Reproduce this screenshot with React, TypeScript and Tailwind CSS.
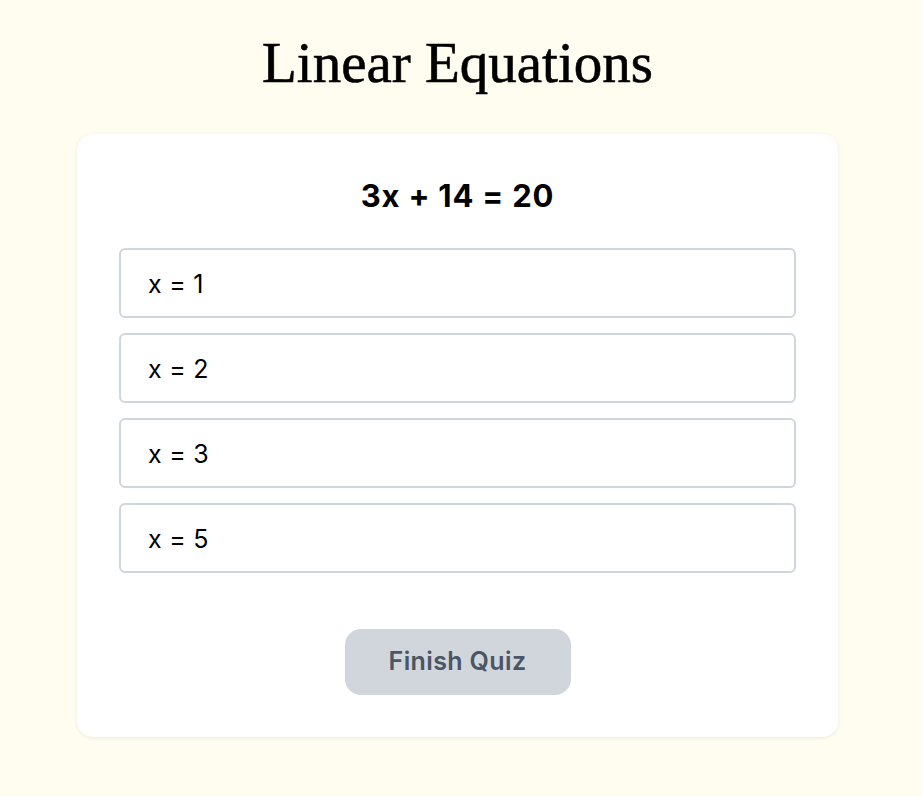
export default function App() {
  const options = ["x = 1", "x = 2", "x = 3", "x = 5"];

  return (
    <div className="min-h-screen bg-[#fffdf0] pt-[35px] pr-[7px] font-['Inter',sans-serif]">
      <h1 className="text-center text-[57px] leading-[56px] text-black font-['Liberation_Serif',serif] [-webkit-text-stroke:0.6px_black]">
        Linear Equations
      </h1>

      <div className="mx-auto mt-[43px] w-[761px] rounded-2xl bg-white px-[42px] pt-[44px] pb-[42px] shadow-[0_1px_4px_rgba(0,0,0,0.08)]">
        <h2 className="text-center text-[31px] leading-9 font-bold tracking-[0.025em] text-black">3x + 14 = 20</h2>

        <div className="mt-[34px] flex flex-col gap-[15px]">
          {options.map((opt) => (
            <button
              key={opt}
              className="h-[70px] rounded-md border-2 border-gray-300 bg-white px-[27px] pt-[3px] text-left text-[25px] tracking-[0.01em] text-black"
            >
              {opt}
            </button>
          ))}
        </div>

        <div className="mt-[56px] flex justify-center">
          <button className="h-[66px] w-[226px] rounded-2xl bg-gray-300 text-[25px] font-semibold tracking-[0.015em] text-gray-600">
            Finish Quiz
          </button>
        </div>
      </div>
    </div>
  );
}
